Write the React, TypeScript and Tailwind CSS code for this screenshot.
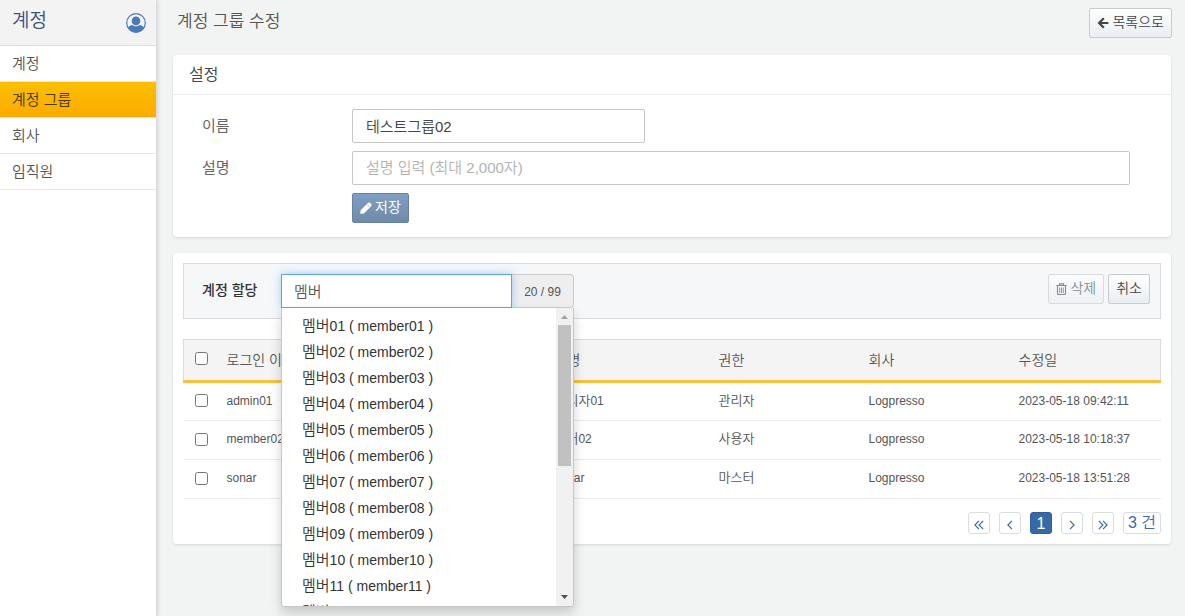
const menu = ["계정", "계정 그룹", "회사", "임직원"];

const members = ["01", "02", "03", "04", "05", "06", "07", "08", "09", "10", "11", "12"];

const rows = [
  { login: "admin01", ko: "관리자", tail: "01", role: "관리자", company: "Logpresso", date: "2023-05-18 09:42:11" },
  { login: "member02", ko: "멤버", tail: "02", role: "사용자", company: "Logpresso", date: "2023-05-18 10:18:37" },
  { login: "sonar", ko: "", tail: "sonar", role: "마스터", company: "Logpresso", date: "2023-05-18 13:51:28" },
];

const button =
  "flex h-[30px] items-center gap-[3px] rounded-[2px] border border-[#c8cacd] bg-linear-to-b from-white to-[#e9eef3] px-[7px] pb-0.5 text-[14px] leading-5 text-[#444]";

function UserIcon() {
  return (
    <svg viewBox="0 0 20 20" className="size-5" aria-hidden="true">
      <clipPath id="face">
        <circle cx="10" cy="10" r="9.2" />
      </clipPath>
      <circle cx="10" cy="10" r="9.3" fill="#f3f3f3" stroke="#4a7ab4" strokeWidth="1.2" />
      <g clipPath="url(#face)" fill="#4a7ab4">
        <path d="M1.500 20v-3.400c0-2.600 2-4 5-4.600 1.900 1.800 5.100 1.800 7 0 3 .6 5 2 5 4.600V20z" />
        <circle cx="10" cy="7.900" r="4.300" />
      </g>
    </svg>
  );
}

function ArrowIcon() {
  return (
    <svg viewBox="0 0 12 12" className="mt-0.5 size-3" aria-hidden="true">
      <path d="M6.800 1.300 2.100 6l4.700 4.700M2.200 6h9.200" fill="none" stroke="currentColor" strokeWidth="2.200" />
    </svg>
  );
}

function PencilIcon() {
  return (
    <svg viewBox="0 0 12 12" className="mt-0.5 size-3" fill="currentColor" aria-hidden="true">
      <path d="M.2 11.800.6 8.200 7.600 1.200C8.600.2 9.400.3 10.300 1.100l.7.700c.9.900.9 1.700-.1 2.700l-7 7z" />
      <path d="m7 2.600 2.600 2.600" stroke="#7896b9" strokeWidth=".5" />
    </svg>
  );
}

function TrashIcon() {
  return (
    <svg viewBox="0 0 11 12" className="mt-0.5 h-3 w-[11px]" fill="none" stroke="currentColor" aria-hidden="true">
      <path d="M.3 2.500h10.400M3.500 2.300V.8h4v1.500" strokeWidth="1.200" />
      <path d="M1.500 3v7.500c0 .6.400 1 1 1h6c.6 0 1-.4 1-1V3" strokeWidth="1.100" />
      <path d="M3.700 4.500v5.500M5.500 4.500v5.500M7.300 4.500v5.500" strokeWidth=".9" />
    </svg>
  );
}

function PageButton({ label, path }: { label: string; path: string }) {
  return (
    <button
      type="button"
      aria-label={label}
      className="flex size-[22px] items-center justify-center rounded-[3px] border border-[#dcdcdc]"
    >
      <svg viewBox="0 0 10 10" className="mt-1 size-2.5" fill="none" stroke="currentColor" strokeWidth="1.200" aria-hidden="true">
        <path d={path} />
      </svg>
    </button>
  );
}

function Sidebar() {
  return (
    <aside className="w-[157px] shrink-0 border-r border-[#d9dadb] bg-white shadow-[1px_0_4px_rgba(0,0,0,0.12)]">
      <div className="flex h-[46px] items-center justify-between border-b border-[#dedede] bg-[#f3f3f3] pr-2.5 pl-3">
        <h1 className="pb-1 text-[19px] leading-6 text-[#36517c]">계정</h1>
        <button type="button" aria-label="내 계정">
          <UserIcon />
        </button>
      </div>
      <nav>
        {menu.map((label) => (
          <a
            key={label}
            href="#"
            className={
              label === "계정 그룹"
                ? "block h-9 border-b border-[#e8e8e8] bg-linear-to-b from-[#fbbf00] to-[#fcab00] px-3 text-[15px] leading-[35px] text-[#4a3606]"
                : "block h-9 border-b border-[#e8e8e8] px-3 text-[15px] leading-[35px] text-[#555]"
            }
          >
            {label}
          </a>
        ))}
      </nav>
    </aside>
  );
}

function MemberPopup() {
  return (
    <div className="absolute top-full left-0 z-10 flex h-[299px] w-full overflow-hidden rounded-b-[3px] border border-t-0 border-[#c6c6c6] bg-white shadow-[0_6px_12px_rgba(0,0,0,0.18)]">
      <ul className="h-full flex-1 overflow-hidden pt-[5px] text-[14px] text-[#333]">
        {members.map((n) => (
          <li key={n} className="h-[26px] pl-5 leading-[26px] whitespace-pre">
            <span className="text-[15px]">멤버</span>
            {`${n} ( member${n} )`}
          </li>
        ))}
      </ul>
      <div className="flex w-[17px] flex-col items-center justify-between bg-[#f1f1f1]">
        <svg viewBox="0 0 17 17" className="size-[17px]" aria-hidden="true">
          <path d="M5 11h7L8.500 7z" fill="#a3a3a3" />
        </svg>
        <div className="mb-auto h-[141px] w-[13px] bg-[#c1c1c1]" />
        <svg viewBox="0 0 17 17" className="size-[17px]" aria-hidden="true">
          <path d="M5 6h7l-3.500 4z" fill="#505050" />
        </svg>
      </div>
    </div>
  );
}

export default function App() {
  return (
    <div className="flex h-screen overflow-hidden bg-[#f2f4f4] font-['Liberation_Sans','Noto_Sans_CJK_KR',sans-serif] font-[350]">
      <Sidebar />
      <main className="min-w-0 flex-1 pr-3.5 pl-4">
        <header className="flex h-[55px] items-start justify-between pt-2">
          <h2 className="pl-1 text-[17px] leading-7 text-[#555]">계정 그룹 수정</h2>
          <button type="button" className={`${button} -mr-px`}>
            <ArrowIcon />
            목록으로
          </button>
        </header>

        <section className="rounded-[4px] bg-white pb-3.5 shadow-[0_1px_3px_rgba(0,0,0,0.12)]">
          <h3 className="h-10 border-b border-[#e9ebec] px-4 text-[16px] leading-10 text-[#444]">설정</h3>
          <div className="flex flex-col gap-2 pt-3.5 pr-[41px] pl-[29px]">
            <div className="flex items-center">
              <label htmlFor="name" className="w-[150px] text-[15px] leading-5 font-normal text-[#666]">
                이름
              </label>
              <input
                id="name"
                defaultValue="테스트그룹02"
                className="h-[34px] w-[293px] rounded-[2px] border border-[#c6c6c6] px-[13px] pb-0.5 text-[15px] text-[#444]"
              />
            </div>
            <div className="flex items-center">
              <label htmlFor="desc" className="w-[150px] text-[15px] leading-5 font-normal text-[#666]">
                설명
              </label>
              <input
                id="desc"
                placeholder="설명 입력 (최대 2,000자)"
                className="h-[34px] min-w-0 flex-1 rounded-[2px] border border-[#c6c6c6] px-[13px] pb-0.5 text-[15px] placeholder:text-[#b3b3b3]"
              />
            </div>
            <button
              type="button"
              className="ml-[150px] flex h-[30px] items-center gap-[3px] self-start rounded-[2px] border border-[#6783a3] bg-linear-to-b from-[#7f9fc4] to-[#6e8aa8] px-[7px] pb-0.5 text-[14px] leading-5 font-normal text-white"
            >
              <PencilIcon />
              저장
            </button>
          </div>
        </section>

        <section className="mt-4 rounded-[4px] bg-white p-2.5 shadow-[0_1px_3px_rgba(0,0,0,0.12)]">
          <div className="flex h-14 items-start border border-[#d9dbdd] bg-[#f5f7f9] pt-2.5 pr-2.5 pl-[18px]">
            <label htmlFor="member" className="w-[79px] text-[14px] leading-8 font-medium text-[#333]">
              계정 할당
            </label>
            <div className="relative flex h-[34px] w-[293px]">
              <input
                id="member"
                defaultValue="멤버"
                className="relative h-full w-[231px] border border-[#5ea5e0] bg-white px-3 pb-0.5 text-[15px] text-[#555] shadow-[0_0_8px_rgba(102,175,233,0.6)] outline-none"
              />
              <span className="flex-1 rounded-r-[4px] border border-l-0 border-[#ccc] bg-[#eee] text-center text-[12px] leading-[34px] text-[#555]">
                20 / 99
              </span>
              <MemberPopup />
            </div>
            <div className="ml-auto flex gap-1">
              <button type="button" disabled className={`${button} opacity-60`}>
                <TrashIcon />
                삭제
              </button>
              <button type="button" className={button}>
                취소
              </button>
            </div>
          </div>

          <table className="mt-5 w-full table-fixed border-collapse text-left text-[12px] text-[#555]">
            <thead>
              <tr className="h-[42px] border border-b-3 border-[#d9dbdd] border-b-[#f9c13c] bg-[#f4f4f4] text-[14px]">
                <th className="w-[31px] pb-1 pl-[11px]">
                  <input type="checkbox" aria-label="모두 선택" className="block size-[13px]" />
                </th>
                <th className="pl-3 font-[350]">로그인 이름</th>
                <th className="w-[164px] pl-3 font-[350]">성명</th>
                <th className="w-[150px] pl-3 font-[350]">권한</th>
                <th className="w-[150px] pl-3 font-[350]">회사</th>
                <th className="w-[154px] pl-3 font-[350]">수정일</th>
              </tr>
            </thead>
            <tbody>
              {rows.map((row) => (
                <tr key={row.login} className="h-[39px] border-b border-[#ececec]">
                  <td className="pb-0.5 pl-[11px]">
                    <input type="checkbox" aria-label={row.login} className="block size-[13px]" />
                  </td>
                  <td className="pb-0.5 pl-3">{row.login}</td>
                  <td className="pb-0.5 pl-3">
                    <span className="text-[13px]">{row.ko}</span>
                    {row.tail}
                  </td>
                  <td className="pb-0.5 pl-3 text-[13px]">{row.role}</td>
                  <td className="pb-0.5 pl-3">{row.company}</td>
                  <td className="pb-0.5 pl-3">{row.date}</td>
                </tr>
              ))}
            </tbody>
          </table>

          <div className="mt-[13px] flex justify-end gap-[9px] text-[16px] leading-[22px] text-[#3a6ba5]">
            <PageButton label="처음" path="M5 .8.900 5 5 9.200M9.200.8 5.100 5l4.100 4.200" />
            <PageButton label="이전" path="M7 .8 2.900 5 7 9.200" />
            <button
              type="button"
              className="size-[22px] rounded-[3px] border border-[#2f5f98] bg-[#366aa6] text-white"
            >
              1
            </button>
            <PageButton label="다음" path="M3 .8 7.100 5 3 9.200" />
            <PageButton label="마지막" path="M.8.800 4.900 5 .8 9.200M5 .8 9.100 5 5 9.200" />
            <span className="h-[22px] w-[38px] rounded-[3px] border border-[#dcdcdc] text-center leading-5 whitespace-nowrap">
              3 건
            </span>
          </div>
        </section>
      </main>
    </div>
  );
}
